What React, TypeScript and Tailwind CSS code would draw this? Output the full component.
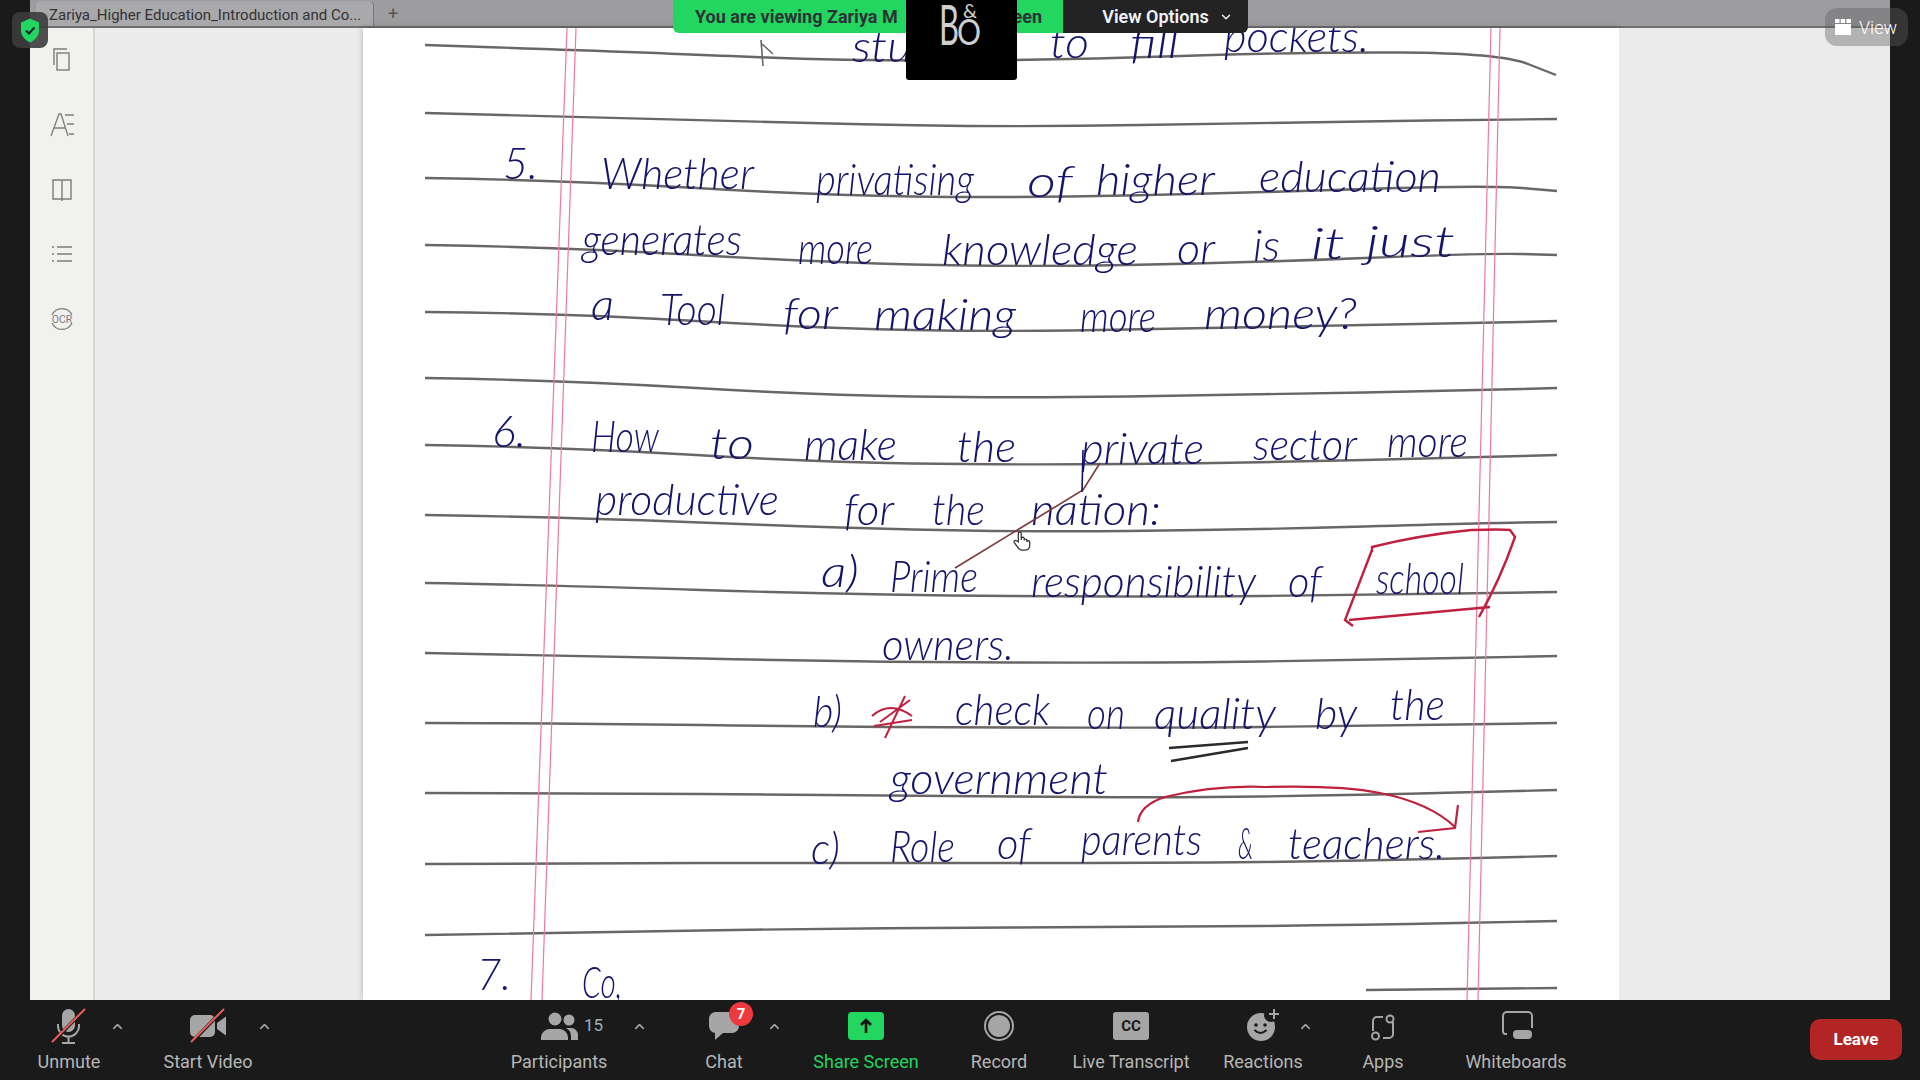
import { ChevronDown, ChevronUp } from 'lucide-react';
import type { ReactNode } from 'react';

type Point = [number, number];
type Word = [string, number, number, number];

const ruledLines: Point[][] = [
  [[425, 45], [640, 52], [844, 61], [1062, 60], [1300, 52], [1500, 53], [1556, 75]],
  [[425, 113], [640, 118], [980, 128], [1300, 122], [1557, 119]],
  [[425, 178], [561, 180], [813, 195], [1012, 198], [1242, 193], [1487, 185], [1557, 191]],
  [[425, 245], [561, 247], [813, 262], [1012, 267], [1242, 263], [1487, 253], [1557, 255]],
  [[425, 312], [561, 313], [813, 328], [1012, 332], [1242, 327], [1487, 323], [1557, 321]],
  [[425, 378], [561, 380], [813, 395], [1012, 398], [1242, 395], [1487, 390], [1557, 388]],
  [[425, 445], [561, 447], [813, 462], [1012, 465], [1242, 463], [1487, 457], [1557, 455]],
  [[425, 515], [561, 517], [813, 527], [1012, 532], [1242, 530], [1487, 523], [1557, 522]],
  [[425, 583], [545, 585], [859, 595], [1165, 597], [1357, 595], [1557, 592]],
  [[425, 653], [545, 655], [859, 662], [1165, 663], [1357, 660], [1557, 656]],
  [[425, 723], [545, 723], [859, 727], [1165, 728], [1357, 726], [1557, 723]],
  [[425, 793], [545, 793], [859, 795], [1165, 798], [1357, 795], [1557, 790]],
  [[425, 864], [545, 863], [859, 863], [1165, 863], [1357, 861], [1557, 856]],
  [[425, 935], [545, 933], [859, 928], [1165, 927], [1357, 925], [1557, 921]],
  [[1366, 990], [1557, 988]],
];

const words: Word[] = [
  ['stu', 852, 912, 62], ['to', 1050, 1089, 58], ['fill', 1130, 1179, 58], ['pockets.', 1224, 1369, 52],
  ['5.', 503, 538, 179], ['Whether', 601, 754, 189], ['privatising', 816, 974, 195], ['of', 1027, 1073, 197],
  ['higher', 1096, 1215, 195], ['education', 1259, 1441, 192],
  ['generates', 582, 742, 255], ['more', 798, 873, 264], ['knowledge', 942, 1138, 265], ['or', 1177, 1215, 264],
  ['is', 1253, 1280, 261], ['it', 1311, 1345, 259], ['just', 1366, 1455, 257],
  ['a', 591, 614, 320], ['Tool', 660, 725, 325], ['for', 783, 838, 329], ['making', 874, 1016, 330],
  ['more', 1080, 1156, 332], ['money?', 1204, 1357, 329],
  ['6.', 492, 526, 447], ['How', 591, 659, 452], ['to', 710, 754, 459], ['make', 804, 897, 460],
  ['the', 957, 1016, 462], ['private', 1081, 1204, 464], ['sector', 1253, 1357, 460], ['more', 1387, 1468, 457],
  ['productive', 595, 779, 515], ['for', 844, 894, 525], ['the', 932, 985, 525], ['nation:', 1031, 1161, 525],
  ['a)', 821, 859, 587], ['Prime', 890, 978, 592], ['responsibility', 1031, 1256, 597], ['of', 1288, 1322, 597],
  ['school', 1376, 1464, 594], ['owners.', 882, 1014, 660],
  ['b)', 813, 842, 727], ['check', 955, 1050, 725], ['on', 1087, 1125, 729], ['quality', 1154, 1276, 729],
  ['by', 1315, 1357, 729], ['the', 1390, 1445, 720], ['government', 890, 1108, 794],
  ['c)', 811, 840, 864], ['Role', 890, 955, 862], ['of', 997, 1031, 859], ['parents', 1081, 1202, 855],
  ['&', 1238, 1253, 859], ['teachers.', 1288, 1445, 859],
  ['7.', 477, 511, 990], ['Co,', 582, 622, 998],
];

// rounds a polyline through the midpoints of its segments
function smooth(points: Point[]) {
  let d = `M${points[0][0]} ${points[0][1]}`;
  for (let i = 1; i < points.length - 1; i++) {
    const mx = (points[i][0] + points[i + 1][0]) / 2;
    const my = (points[i][1] + points[i + 1][1]) / 2;
    d += ` Q${points[i][0]} ${points[i][1]} ${mx} ${my}`;
  }
  const last = points[points.length - 1];
  return `${d} L${last[0]} ${last[1]}`;
}

function NotebookPage() {
  return (
    <svg viewBox="363 28 1256 972" className="h-full w-full blur-[0.5px]">
      {ruledLines.map((line, i) => (
        <path key={i} d={smooth(line)} fill="none" stroke="#6a6666" strokeWidth="2.4" />
      ))}
      <g stroke="#ee7a9c" strokeWidth="1.2">
        <line x1="567" y1="28" x2="531" y2="1000" />
        <line x1="576" y1="28" x2="542" y2="1000" />
        <line x1="1491" y1="28" x2="1467" y2="1000" />
        <line x1="1500" y1="28" x2="1478" y2="1000" />
      </g>
      {words.map(([text, x1, x2, y], i) => (
        <text
          key={i}
          x={x1}
          y={y}
          textLength={x2 - x1}
          lengthAdjust="spacingAndGlyphs"
          fontSize="44"
          className="fill-[#14146a] font-['Lato',sans-serif] font-light italic"
        >
          {text}
        </text>
      ))}
      <path d="M1100 463 L1083 490 L955 568" fill="none" stroke="#7a3a3a" strokeWidth="1.6" />
      <path d="M1083 450 L1082 492" fill="none" stroke="#14146a" strokeWidth="1.6" />
      <path
        d="M1372 552 L1372 547 Q1420 535 1471 530 Q1500 529 1510 530 L1515 537 Q1500 580 1479 617 M1490 607 L1349 620 M1372 550 L1345 620 L1353 626"
        fill="none"
        stroke="#c0203f"
        strokeWidth="2.4"
      />
      <path
        d="M1138 822 Q1140 805 1165 797 Q1215 785 1265 787 Q1340 785 1380 793 Q1430 803 1455 827 M1458 805 L1455 828 L1418 832"
        fill="none"
        stroke="#c0203f"
        strokeWidth="2.2"
      />
      <path d="M1169 748 L1248 742 M1171 761 L1248 748" fill="none" stroke="#2a2a2a" strokeWidth="2.6" />
      <path d="M880 722 L910 700 M872 716 Q890 700 912 716 M885 738 L905 696 M874 726 L912 720" fill="none" stroke="#c0203f" strokeWidth="2" />
      <path d="M761 40 L763 66 M762 44 L773 54" fill="none" stroke="#666" strokeWidth="1.6" />
    </svg>
  );
}

function BangOlufsenLogo() {
  return (
    <svg viewBox="0 0 111 80" className="h-[80px] w-[111px]">
      <g className="fill-[#cfcfcf] font-['Lato',sans-serif] font-normal">
        <text x="33" y="45" fontSize="56" textLength="20" lengthAdjust="spacingAndGlyphs">B</text>
        <text x="57" y="18" fontSize="20" textLength="14" lengthAdjust="spacingAndGlyphs">&amp;</text>
        <text x="51" y="45" fontSize="36" textLength="24" lengthAdjust="spacingAndGlyphs">O</text>
      </g>
    </svg>
  );
}

function MicIcon() {
  return (
    <svg viewBox="0 0 36 36" className="h-9 w-9">
      <rect x="11" y="1" width="13" height="23" rx="6.5" fill="#a6a6a6" />
      <path d="M7 16v2a10.5 10.5 0 0 0 21 0v-2M17.5 29v5M11 35h13" fill="none" stroke="#a6a6a6" strokeWidth="2" />
      <path d="M1 35 L34 1" stroke="#1a1a1a" strokeWidth="3.5" />
      <path d="M1 34 L34 1" stroke="#ee5a5a" strokeWidth="2" />
    </svg>
  );
}

function VideoIcon() {
  return (
    <svg viewBox="0 0 36 36" className="h-9 w-9">
      <rect x="0" y="7" width="25" height="22" rx="5" fill="#a6a6a6" />
      <path d="M27 15 L36 8.5 V27.5 L27 21 Z" fill="#a6a6a6" />
      <path d="M1 35 L34 1" stroke="#1a1a1a" strokeWidth="3.5" />
      <path d="M1 34 L34 1" stroke="#ee5a5a" strokeWidth="2" />
    </svg>
  );
}

function ParticipantsIcon() {
  return (
    <svg viewBox="0 0 38 36" className="h-9 w-[38px]">
      <circle cx="15" cy="11" r="6.5" fill="#a6a6a6" />
      <circle cx="29" cy="12" r="5.5" fill="#a6a6a6" />
      <path d="M1 32 V29 A9 9 0 0 1 10 21 H20 A9 9 0 0 1 28 29 V32 Z" fill="#a6a6a6" />
      <path d="M29 20 H31 A7 7 0 0 1 38 28 V32 H31 V28 A9 9 0 0 0 26 20 Z" fill="#a6a6a6" />
    </svg>
  );
}

function ChatIcon() {
  return (
    <svg viewBox="0 0 32 36" className="h-9 w-8">
      <path d="M7 4 H24 A7 7 0 0 1 31 11 V18 A7 7 0 0 1 24 25 H15 L7 32 V25 A7 7 0 0 1 1 18 V11 A7 7 0 0 1 7 4 Z" fill="#a6a6a6" />
    </svg>
  );
}

function ShareIcon() {
  return (
    <svg viewBox="0 0 36 36" className="h-9 w-9">
      <rect x="0" y="4" width="36" height="28" rx="4" fill="#22d65f" />
      <path d="M18 25 V12 M13 17 L18 12 L23 17" fill="none" stroke="#111" strokeWidth="2.6" />
    </svg>
  );
}

function RecordIcon() {
  return (
    <svg viewBox="0 0 36 36" className="h-9 w-9">
      <circle cx="18" cy="18" r="14" fill="none" stroke="#a6a6a6" strokeWidth="2" />
      <circle cx="18" cy="18" r="11" fill="#a6a6a6" />
    </svg>
  );
}

function TranscriptIcon() {
  return (
    <svg viewBox="0 0 36 36" className="h-9 w-9">
      <rect x="0" y="4" width="36" height="28" rx="3" fill="#a6a6a6" />
      <text x="18" y="23" textAnchor="middle" fontSize="15" className="fill-[#1a1a1a] font-['Roboto',sans-serif] font-bold">
        CC
      </text>
    </svg>
  );
}

function ReactionsIcon() {
  return (
    <svg viewBox="0 0 36 36" className="h-9 w-9">
      <circle cx="16" cy="19" r="14" fill="#a6a6a6" />
      <circle cx="26" cy="7" r="7" fill="#1a1a1a" />
      <path d="M29 1 V11 M24 6 H34" stroke="#a6a6a6" strokeWidth="2" />
      <circle cx="11" cy="17" r="1.8" fill="#1a1a1a" />
      <circle cx="20" cy="17" r="1.8" fill="#1a1a1a" />
      <path d="M9.5 22 Q15.5 28 21.5 22" fill="none" stroke="#1a1a1a" strokeWidth="2" />
    </svg>
  );
}

function AppsIcon() {
  return (
    <svg viewBox="0 0 36 36" className="h-9 w-9">
      <g fill="none" stroke="#a6a6a6" strokeWidth="2">
        <path d="M8 23 V13 A4 4 0 0 1 12 9 H18" />
        <path d="M28 14 V26 A4 4 0 0 1 24 30 H18" />
        <circle cx="25" cy="11" r="3.5" />
        <circle cx="10.5" cy="28" r="3.5" />
      </g>
    </svg>
  );
}

function WhiteboardIcon() {
  return (
    <svg viewBox="0 0 36 36" className="h-9 w-9">
      <path d="M8 26 H6 A3 3 0 0 1 4 23 V8 A4 4 0 0 1 8 4 H29 A4 4 0 0 1 33 8 V20" fill="none" stroke="#a6a6a6" strokeWidth="2" transform="translate(1 0)" />
      <rect x="15" y="22" width="19" height="9" rx="4" fill="#a6a6a6" />
    </svg>
  );
}

function ToolButton({ label, className, labelClass = 'text-[#b6b6b6]', children }: { label: string; className: string; labelClass?: string; children: ReactNode }) {
  return (
    <div className={`relative flex shrink-0 flex-col items-center ${className}`}>
      <div className="flex h-9 items-center justify-center">{children}</div>
      <span className={`mt-2 whitespace-nowrap text-[18px] leading-5 ${labelClass}`}>{label}</span>
    </div>
  );
}

function Caret({ className }: { className: string }) {
  return (
    <div className={`flex h-9 w-[10px] shrink-0 items-center justify-center ${className}`}>
      <ChevronUp size={15} strokeWidth={2.5} className="shrink-0 text-[#a6a6a6]" />
    </div>
  );
}

function Toolbar() {
  return (
    <footer className="flex h-[80px] shrink-0 items-start bg-[#1a1a1a] pl-[26px] pr-[18px] pt-2 font-['Roboto',sans-serif]">
      <ToolButton label="Unmute" className="w-[86px]"><MicIcon /></ToolButton>
      <Caret className="" />
      <ToolButton label="Start Video" className="ml-[38px] w-[96px]"><VideoIcon /></ToolButton>
      <Caret className="ml-[3px]" />
      <ToolButton label="Participants" className="ml-[240px] w-[100px]">
        <ParticipantsIcon />
        <span className="absolute left-[75px] top-[7px] text-[17px] leading-5 text-[#9fb0c0]">15</span>
      </ToolButton>
      <Caret className="ml-[25px]" />
      <ToolButton label="Chat" className="ml-[60px] w-[40px]">
        <ChatIcon />
        <span className="absolute left-[25px] top-[-6px] flex h-6 w-6 items-center justify-center rounded-full bg-[#ee3a3f] text-[15px] font-bold text-white">7</span>
      </ToolButton>
      <Caret className="ml-[25px]" />
      <ToolButton label="Share Screen" labelClass="text-[#22d65f]" className="ml-[33px] w-[108px]"><ShareIcon /></ToolButton>
      <ToolButton label="Record" className="ml-[49px] w-[60px]"><RecordIcon /></ToolButton>
      <ToolButton label="Live Transcript" className="ml-[41px] w-[122px]"><TranscriptIcon /></ToolButton>
      <ToolButton label="Reactions" className="ml-[31px] w-[80px]"><ReactionsIcon /></ToolButton>
      <Caret className="ml-[-3px]" />
      <ToolButton label="Apps" className="ml-[51px] w-[44px]"><AppsIcon /></ToolButton>
      <ToolButton label="Whiteboards" className="ml-[57px] w-[108px]"><WhiteboardIcon /></ToolButton>
      <button className="ml-auto mt-[11px] flex h-[41px] w-[92px] items-center justify-center rounded-[10px] bg-[#b32525] text-[17px] font-bold text-white">
        Leave
      </button>
    </footer>
  );
}

function ReaderSidebar() {
  return (
    <aside className="flex w-[65px] shrink-0 flex-col items-center gap-[37px] border-r-2 border-[#d4d4d2] bg-[#f1f1ef] pt-[17px] text-[#7c7c7c]">
      <svg viewBox="0 0 24 28" className="h-7 w-6" fill="none" stroke="currentColor" strokeWidth="1.4">
        <path d="M4 20 V4 H17" />
        <rect x="7" y="8" width="12" height="17" />
      </svg>
      <svg viewBox="0 0 26 28" className="h-7 w-[26px]" fill="none" stroke="currentColor" strokeWidth="1.3">
        <path d="M2 26 L10 4 H12 L19 26 M5 18 H16 M16 5 H25 M18 14 H25 M20 24 H25" />
      </svg>
      <svg viewBox="0 0 24 28" className="h-7 w-6" fill="none" stroke="currentColor" strokeWidth="1.4">
        <path d="M3 5 H21 V24 H3 Z M12 5 V26" />
      </svg>
      <svg viewBox="0 0 24 28" className="h-7 w-6" fill="none" stroke="currentColor" strokeWidth="1.3">
        <path d="M7 7 H22 M7 14 H22 M7 21 H22" />
        <path d="M2 7 H4 M2 14 H4 M2 21 H4" />
      </svg>
      <svg viewBox="0 0 26 28" className="h-7 w-[26px]" fill="none" stroke="currentColor" strokeWidth="1.2">
        <path d="M3 10 A11 11 0 0 1 23 10 M3 18 A11 11 0 0 0 23 18" />
        <text x="13" y="18" textAnchor="middle" fontSize="10.5" fill="currentColor" stroke="none" className="font-['Roboto',sans-serif]">OCR</text>
      </svg>
    </aside>
  );
}

export default function App() {
  return (
    <div className="relative flex h-[1080px] w-[1920px] flex-col overflow-hidden bg-[#1a1a1a] font-['Roboto',sans-serif]">
      <main className="flex min-h-0 flex-1 px-[30px]">
        <div className="flex min-w-0 flex-1 flex-col">
          <div className="flex h-[28px] shrink-0 items-end border-b-2 border-[#6e6e70] bg-[#9d9c9e] pl-[6px]">
            <div className="flex h-[25px] w-[338px] items-center rounded-t-[5px] border-r border-[#77777a] bg-[#a9a8aa] pl-[13px] pt-[3px] text-[15px] leading-none text-[#333]">
              <span className="whitespace-nowrap">Zariya_Higher Education_Introduction and Co...</span>
            </div>
            <span className="mb-[3px] ml-[14px] text-[18px] leading-none text-[#555]">+</span>
          </div>
          <div className="flex min-h-0 flex-1">
            <ReaderSidebar />
            <div className="w-[268px] shrink-0 bg-[#ececec]" />
            <div className="w-[1256px] shrink-0 bg-white shadow-[0_0_6px_rgba(0,0,0,0.25)]">
              <NotebookPage />
            </div>
            <div className="flex-1 bg-[#ebebeb]" />
          </div>
        </div>
      </main>
      <Toolbar />

      {/* things floating over the shared screen */}
      <div className="absolute left-3 top-3 flex h-9 w-9 items-center justify-center rounded-lg bg-[#3c3c3c]/90">
        <svg viewBox="0 0 20 24" className="h-[25px] w-[20px]">
          <path d="M10 0 L19 4 V12 C19 18 14 22 10 24 C6 22 1 18 1 12 V4 Z" fill="#22d65f" />
          <path d="M6 12 L9 15 L14.5 9" fill="none" stroke="#123" strokeWidth="2" />
        </svg>
      </div>
      <div className="absolute left-[673px] top-0 flex h-[33px] text-[18px] leading-none">
        <div className="flex w-[390px] items-center justify-between rounded-bl-md bg-[#22d65f] pl-[22px] pr-[21px] font-bold text-[#2c3338]">
          <span>You are viewing Zariya M</span>
          <span>een</span>
        </div>
        <div className="flex w-[185px] items-center justify-center gap-[10px] rounded-br-md bg-[#232323] pl-[24px] font-semibold text-[#eef2f6]">
          <span>View Options</span>
          <ChevronDown size={14} strokeWidth={2.5} />
        </div>
      </div>
      <div className="absolute left-[906px] top-0 h-[80px] w-[111px] rounded-b-[3px] bg-black">
        <BangOlufsenLogo />
      </div>
      <div className="absolute left-[1825px] top-[8px] flex h-[38px] w-[83px] items-center gap-[8px] rounded-xl bg-[#5f5f5f]/40 pl-[10px] text-[18px] font-light text-white">
        <svg viewBox="0 0 16 16" className="h-4 w-4" fill="currentColor">
          <rect x="0" y="0" width="4.5" height="4" />
          <rect x="5.7" y="0" width="4.5" height="4" />
          <rect x="11.4" y="0" width="4.6" height="4" />
          <rect x="0" y="5" width="16" height="11" />
        </svg>
        <span>View</span>
      </div>
      <svg viewBox="0 0 24 24" className="absolute left-[1011px] top-[530px] h-[22px] w-[22px]" fill="#fff" stroke="#333" strokeWidth="1.4">
        <path d="M8 13 V4 a1.6 1.6 0 0 1 3.2 0 V11 V9.5 a1.6 1.6 0 0 1 3.2 0 V11.5 a1.5 1.5 0 0 1 3 0 V13 a1.5 1.5 0 0 1 3 0 V17 C20.4 20 18 22 15 22 H12 C9 22 8 20 6 17 L3.6 13.8 a1.6 1.6 0 0 1 2.4 -2 Z" />
      </svg>
    </div>
  );
}
